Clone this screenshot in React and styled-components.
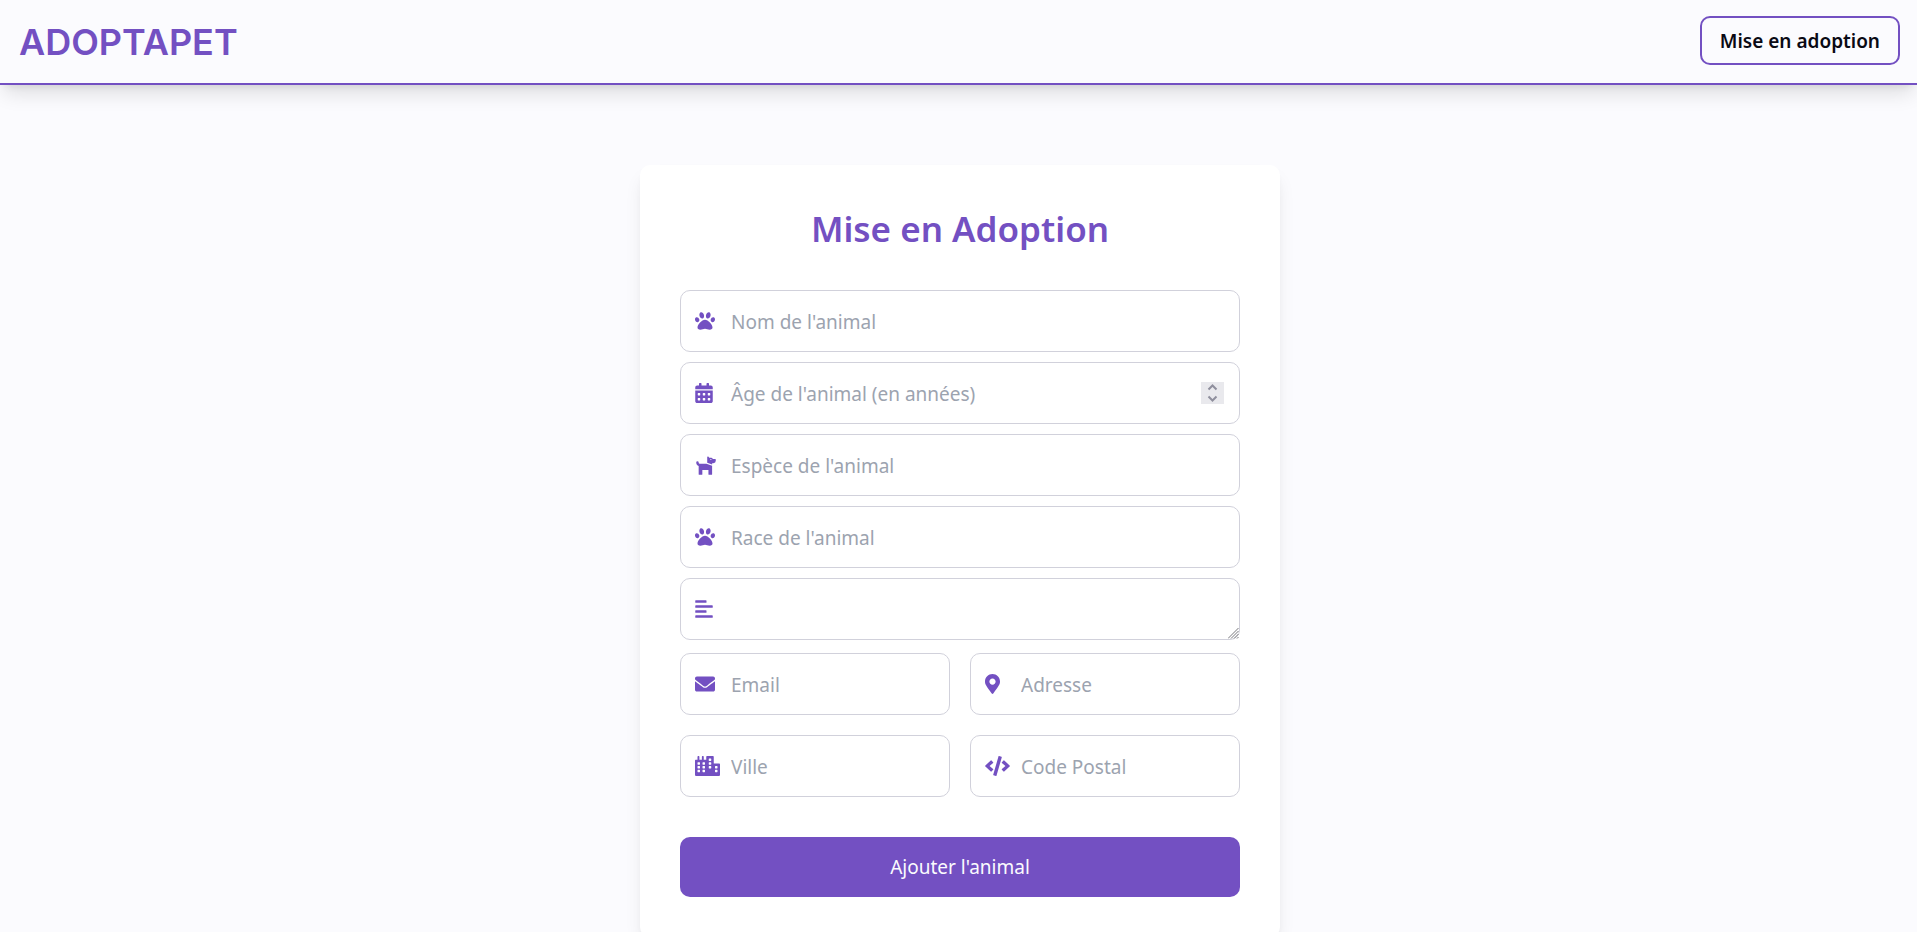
import React, { useRef } from "react";
import styled, { createGlobalStyle } from "styled-components";
import {
  FaPaw,
  FaCalendarAlt,
  FaDog,
  FaAlignLeft,
  FaEnvelope,
  FaMapMarkerAlt,
  FaCity,
  FaCode,
} from "react-icons/fa";

const purple = "#7350c2";

const GlobalStyle = createGlobalStyle`
  *, *::before, *::after { box-sizing: border-box; }
  html { scrollbar-width: none; }
  body {
    margin: 0;
    background: #fbfbfe;
    color: #0a0a14;
    font-family: "Noto Sans", sans-serif;
    font-size: 19px;
    line-height: 30px;
  }
`;

const Header = styled.header`
  display: flex;
  align-items: flex-start;
  justify-content: space-between;
  padding: 16px 17px 15px 19px;
  border-bottom: 2px solid ${purple};
  box-shadow: 0 12px 19px -4px rgba(0, 0, 0, 0.12), 0 5px 8px -5px rgba(0, 0, 0, 0.1);
`;

const Logo = styled.a`
  color: ${purple};
  font-family: Inter, sans-serif;
  font-size: 36px;
  font-weight: 600;
  line-height: 52px;
  text-decoration: none;
`;

const NavLink = styled.a`
  padding: 8px 18px 7px;
  border: 2px solid ${purple};
  border-radius: 10px;
  color: inherit;
  font-weight: 600;
  text-decoration: none;
`;

const Main = styled.main`
  display: flex;
  justify-content: center;
  padding: 80px 0 80px 3px;
`;

const Form = styled.form`
  display: flex;
  flex-direction: column;
  width: 100%;
  max-width: 640px;
  padding: 40px;
  border-radius: 10px;
  background: #fff;
  box-shadow: 0 12px 19px -4px rgba(0, 0, 0, 0.1), 0 5px 8px -5px rgba(0, 0, 0, 0.1);
`;

const Title = styled.h1`
  margin: 0 0 37px;
  color: ${purple};
  font-size: 35px;
  font-weight: 600;
  line-height: 48px;
  text-align: center;
`;

const Stack = styled.div`
  display: grid;
  gap: 10px;
`;

const Pair = styled.div`
  display: grid;
  grid-template-columns: 1fr 1fr;
  gap: 20px;
  margin: 13px 0 40px;
`;

const Field = styled.div`
  position: relative;
  display: flex;
  align-items: center;
`;

const FieldIcon = styled.span`
  position: absolute;
  left: 15px;
  display: flex;
  color: ${purple};
  pointer-events: none;

  svg {
    width: ${(p) => p.$width}px;
    height: 20px;
  }
`;

const Input = styled.input`
  width: 100%;
  height: 62px;
  padding: 16px 15px 14px 50px;
  border: 1px solid #d1d1db;
  border-radius: 10px;
  background: #fff;
  color: inherit;
  font: inherit;

  &::placeholder {
    color: #9ca3af;
    opacity: 1;
  }

  &::-webkit-inner-spin-button {
    appearance: none;
    margin: 0;
  }
`;

const TextArea = styled(Input).attrs({ as: "textarea", rows: 1 })`
  display: block;
  resize: vertical;

  &::-webkit-resizer {
    background: transparent;
  }
`;

const Grip = styled.svg`
  position: absolute;
  right: 1px;
  bottom: 1px;
  width: 11px;
  height: 11px;
  pointer-events: none;
`;

const Stepper = styled.div`
  position: absolute;
  right: 16px;
  display: grid;
  width: 23px;
  background: #e9e9ed;
`;

const Step = styled.button`
  display: flex;
  align-items: center;
  justify-content: center;
  height: 11px;
  padding: 0;
  border: 0;
  background: transparent;
  color: #8f8f9d;
`;

const Submit = styled.button`
  height: 60px;
  border: 0;
  border-radius: 10px;
  background: ${purple};
  color: #fbfbfe;
  font: inherit;
  cursor: pointer;
`;

function Chevron({ d }) {
  return (
    <svg width="11" height="7" viewBox="0 0 11 7" fill="none" stroke="currentColor" strokeWidth="2" aria-hidden="true">
      <path d={d} />
    </svg>
  );
}

function IconField({ icon: Icon, iconWidth, label, type = "text" }) {
  return (
    <Field>
      <FieldIcon $width={iconWidth}>
        <Icon aria-hidden="true" />
      </FieldIcon>
      <Input type={type} placeholder={label} aria-label={label} />
    </Field>
  );
}

function NumberField({ icon: Icon, iconWidth, label }) {
  const input = useRef(null);
  return (
    <Field>
      <FieldIcon $width={iconWidth}>
        <Icon aria-hidden="true" />
      </FieldIcon>
      <Input ref={input} type="number" placeholder={label} aria-label={label} />
      <Stepper>
        <Step type="button" aria-label="Augmenter" onClick={() => input.current.stepUp()}>
          <Chevron d="M1.5 5.5 5.5 1.5 9.5 5.5" />
        </Step>
        <Step type="button" aria-label="Diminuer" onClick={() => input.current.stepDown()}>
          <Chevron d="M1.5 1.5 5.5 5.5 9.5 1.5" />
        </Step>
      </Stepper>
    </Field>
  );
}

export default function App() {
  return (
    <>
      <GlobalStyle />
      <Header>
        <Logo href="#">ADOPTAPET</Logo>
        <NavLink href="#adoption">Mise en adoption</NavLink>
      </Header>
      <Main>
        <Form id="adoption">
          <Title>Mise en Adoption</Title>
          <Stack>
            <IconField icon={FaPaw} iconWidth={20} label="Nom de l'animal" />
            <NumberField icon={FaCalendarAlt} iconWidth={18} label="Âge de l'animal (en années)" />
            <IconField icon={FaDog} iconWidth={22} label="Espèce de l'animal" />
            <IconField icon={FaPaw} iconWidth={20} label="Race de l'animal" />
            <Field>
              <FieldIcon $width={18}>
                <FaAlignLeft aria-hidden="true" />
              </FieldIcon>
              <TextArea aria-label="Description" />
              <Grip viewBox="0 0 11 11" stroke="#77777c" aria-hidden="true">
                <path d="M0 10.5 10.5 0M3 10.5 10.5 3M6 10.5 10.5 6M9 10.5 10.5 9" />
              </Grip>
            </Field>
          </Stack>
          <Pair>
            <IconField icon={FaEnvelope} iconWidth={20} label="Email" type="email" />
            <IconField icon={FaMapMarkerAlt} iconWidth={15} label="Adresse" />
            <IconField icon={FaCity} iconWidth={25} label="Ville" />
            <IconField icon={FaCode} iconWidth={25} label="Code Postal" />
          </Pair>
          <Submit type="button">Ajouter l'animal</Submit>
        </Form>
      </Main>
    </>
  );
}
